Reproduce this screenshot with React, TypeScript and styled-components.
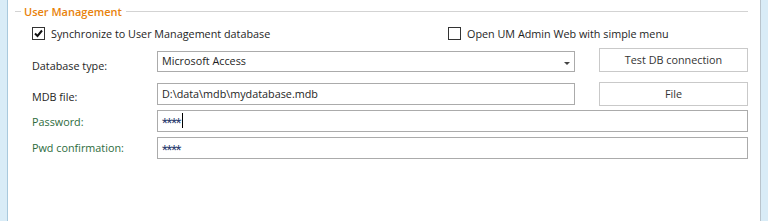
import styled, { createGlobalStyle } from 'styled-components';

const GlobalStyle = createGlobalStyle`
  html, body {
    margin: 0;
    padding: 0;
    background: #ffffff;
  }
  body {
    font-family: 'Open Sans', 'Noto Sans', sans-serif;
    font-size: 10.8px;
    color: #1e1e1e;
  }
`;

const Window = styled.div`
  display: flex;
  width: 768px;
  height: 221px;
  overflow: hidden;
`;

const SideStrip = styled.div<{ $side: 'left' | 'right' }>`
  width: 7px;
  flex-shrink: 0;
  background: #d9ecf7;
  ${({ $side }) =>
    $side === 'left'
      ? 'border-right: 1px solid #a9c9dd;'
      : 'border-left: 1px solid #b9c4cc;'}
`;

const Panel = styled.div`
  flex: 1;
  background: #ffffff;
  padding: 4px 4px 0 7px;
`;

const Group = styled.section`
  width: 733px;
`;

const GroupHeader = styled.div`
  display: flex;
  align-items: center;
  height: 15px;
  gap: 3px;
`;

const HeaderLine = styled.div<{ $grow?: boolean }>`
  height: 1px;
  background: #d3d3d3;
  ${({ $grow }) => ($grow ? 'flex: 1;' : 'width: 6px;')}
`;

const HeaderTitle = styled.span`
  color: #e8820c;
  font-weight: 600;
  font-size: 11px;
  padding-right: 1px;
`;

const CheckRow = styled.div`
  display: flex;
  align-items: center;
  margin: 7px 0 0 17px;
  height: 14px;
`;

const CheckItem = styled.label<{ $width?: number }>`
  display: flex;
  align-items: center;
  gap: 6px;
  ${({ $width }) => ($width ? `width: ${$width}px;` : '')}
`;

const Box = styled.span`
  width: 11px;
  height: 11px;
  margin-top: 1px;
  border: 1px solid #333333;
  background: #ffffff;
  display: inline-flex;
  align-items: center;
  justify-content: center;
`;

const Form = styled.div`
  display: grid;
  grid-template-columns: 101px 418px 149px;
  grid-template-rows: 24px 34px 26px 27px;
  column-gap: 24px;
  margin: 8px 0 0 17px;
`;

const Label = styled.span<{ $accent?: boolean; $row: number; $shift: number }>`
  grid-column: 1;
  grid-row: ${({ $row }) => $row};
  align-self: end;
  height: 22px;
  display: flex;
  align-items: center;
  padding-top: ${({ $shift }) => Math.max($shift, 0)}px;
  padding-bottom: ${({ $shift }) => Math.max(-$shift, 0)}px;
  box-sizing: border-box;
  color: ${({ $accent }) => ($accent ? '#2d6b3c' : '#1e1e1e')};
`;

const Field = styled.div<{ $wide?: boolean; $row: number; $short?: boolean; $lift?: number }>`
  grid-column: ${({ $wide }) => ($wide ? '2 / 4' : '2')};
  grid-row: ${({ $row }) => $row};
  align-self: end;
  margin-bottom: ${({ $lift }) => $lift ?? 0}px;
  height: ${({ $short }) => ($short ? 21 : 22)}px;
  box-sizing: border-box;
  border: 1px solid #ababab;
  background: #ffffff;
  display: flex;
  align-items: center;
  padding: 0 6px 2px 4px;
  position: relative;
`;

const Secret = styled.span`
  font-family: Roboto, sans-serif;
  font-size: 13px;
  letter-spacing: -1px;
  color: #2a3b6e;
  line-height: 1;
  padding-top: 5px;
`;

const Caret = styled.span`
  width: 1px;
  height: 15px;
  background: #000000;
  margin: 1px 0 0 2px;
`;

const Arrow = styled.span`
  position: absolute;
  right: 4px;
  top: 10px;
  width: 0;
  height: 0;
  border-left: 3px solid transparent;
  border-right: 3px solid transparent;
  border-top: 3px solid #444444;
`;

const Button = styled.button<{ $row: number }>`
  grid-column: 3;
  grid-row: ${({ $row }) => $row};
  align-self: end;
  height: 24px;
  border: 1px solid #c9c9c9;
  background: #ffffff;
  font-family: inherit;
  font-size: 10.8px;
  color: #333333;
  padding: 0 0 1px;
`;

const Check = () => (
  <svg width="9" height="9" viewBox="0 0 9 9">
    <path d="M1 4.5 L3.5 7 L8 1.5" fill="none" stroke="#111" strokeWidth="2" />
  </svg>
);

export default function App() {
  return (
    <Window>
      <GlobalStyle />
      <SideStrip $side="left" />
      <Panel>
        <Group>
          <GroupHeader>
            <HeaderLine />
            <HeaderTitle>User Management</HeaderTitle>
            <HeaderLine $grow />
          </GroupHeader>
          <CheckRow>
            <CheckItem $width={416}>
              <Box>
                <Check />
              </Box>
              Synchronize to User Management database
            </CheckItem>
            <CheckItem>
              <Box />
              Open UM Admin Web with simple menu
            </CheckItem>
          </CheckRow>
          <Form>
            <Label $row={1} $shift={8}>Database type:</Label>
            <Field $row={1} $short>
              Microsoft Access
              <Arrow />
            </Field>
            <Button $row={1}>Test DB connection</Button>

            <Label $row={2} $shift={2}>MDB file:</Label>
            <Field $row={2} $lift={1}>D:\data\mdb\mydatabase.mdb</Field>
            <Button $row={2}>File</Button>

            <Label $accent $row={3} $shift={0}>Password:</Label>
            <Field $wide $row={3}>
              <Secret>****</Secret>
              <Caret />
            </Field>

            <Label $accent $row={4} $shift={-2}>Pwd confirmation:</Label>
            <Field $wide $row={4}>
              <Secret>****</Secret>
            </Field>
          </Form>
        </Group>
      </Panel>
      <SideStrip $side="right" />
    </Window>
  );
}
